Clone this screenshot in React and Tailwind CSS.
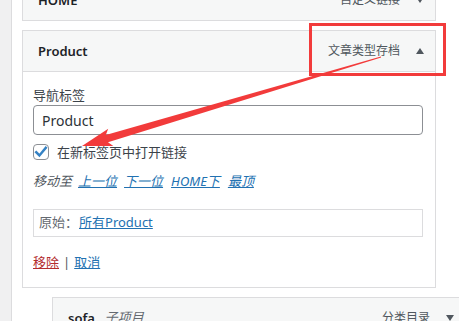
import React from "react";

function TriDown({ className = "" }) {
  return (
    <span
      className={
        "inline-block w-0 h-0 border-l-[4px] border-r-[4px] border-t-[6px] border-l-transparent border-r-transparent border-t-[#50575e] " +
        className
      }
    />
  );
}
function TriUp({ className = "" }) {
  return (
    <span
      className={
        "inline-block w-0 h-0 border-l-[4px] border-r-[4px] border-b-[6px] border-l-transparent border-r-transparent border-b-[#50575e] " +
        className
      }
    />
  );
}

export default function App() {
  // arrow geometry
  const T = [381, 57];
  const P = [82, 146];
  const dx = P[0] - T[0];
  const dy = P[1] - T[1];
  const len = Math.hypot(dx, dy);
  const u = [dx / len, dy / len];
  const n = [-u[1], u[0]];
  const pt = (base, back, off) => [
    base[0] - u[0] * back + n[0] * off,
    base[1] - u[1] * back + n[1] * off,
  ];
  const pts = [
    pt(T, 0, 0.5),
    pt(P, 26, 3.8),
    pt(P, 30, 9),
    P,
    pt(P, 30, -9),
    pt(P, 26, -3.8),
    pt(T, 0, -0.5),
  ]
    .map((p) => p[0].toFixed(1) + "," + p[1].toFixed(1))
    .join(" ");

  return (
    <div className="relative w-[459px] h-[321px] overflow-hidden bg-white flex font-['Noto_Sans','Noto_Sans_CJK_SC',sans-serif] text-[13px] text-[#3c434a]">
      <div className="w-[12px] shrink-0 bg-[#f0f0f1] border-r border-[#dcdcde]" />
      <div className="flex-1 pl-[10px]">
        {/* HOME item */}
        <div className="mt-[-21px] w-[414px] h-[42px] border border-[#dcdcde] bg-[#f6f7f7] flex items-center pl-[15px] pr-[11px]">
          <span className="font-semibold text-[#1d2327] leading-[20px]">HOME</span>
          <span className="ml-auto text-[12px] text-[#50575e]">自定义链接</span>
          <TriDown className="ml-[16px]" />
        </div>

        {/* Product item */}
        <div className="mt-[9px] w-[414px]">
          <div className="h-[42px] border border-[#dcdcde] bg-[#f6f7f7] flex items-center pl-[15px] pr-[11px]">
            <span className="font-semibold text-[#1d2327] leading-[20px]">Product</span>
            <span className="ml-auto text-[12px] text-[#50575e]">文章类型存档</span>
            <TriUp className="ml-[16px]" />
          </div>
          <div className="border-l border-r border-b border-[#dcdcde] bg-white pl-[10px] pr-[12px] pt-[14px] pb-[15px]">
            <div className="leading-[19px] text-[#3c434a]">导航标签</div>
            <div className="h-[30px] border border-[#8c8f94] rounded-[4px] flex items-center pl-[8px] text-[14px] text-[#2c3338]">
              Product
            </div>
            <div className="mt-[9px] h-[16px] flex items-center">
              <span className="w-[16px] h-[16px] shrink-0 border border-[#8c8f94] rounded-[4px] bg-white flex items-center justify-center">
                <svg width="14" height="14" viewBox="0 0 14 14">
                  <path
                    d="M2.2 7.2 L5.4 10.4 L11.8 2.8"
                    fill="none"
                    stroke="#3582c4"
                    strokeWidth="2.4"
                    strokeLinecap="square"
                  />
                </svg>
              </span>
              <span className="ml-[8px] leading-[16px]">在新标签页中打开链接</span>
            </div>
            <div className="mt-[11px] leading-[20px] flex italic">
              <span className="text-[#50575e]">移动至</span>
              <span className="ml-[6px] text-[#2271b1] underline">上一位</span>
              <span className="ml-[7px] text-[#2271b1] underline">下一位</span>
              <span className="ml-[8px] text-[#2271b1] underline">HOME下</span>
              <span className="ml-[8px] text-[#2271b1] underline">最顶</span>
            </div>
            <div className="mt-[18px] h-[28px] border border-[#dcdcde] flex items-center pl-[5px]">
              <span className="text-[#646970]">原始：</span>
              <span className="ml-[1px] text-[#2271b1] underline">所有Product</span>
            </div>
            <div className="mt-[15px] leading-[20px] flex">
              <span className="text-[#b32d2e] underline">移除</span>
              <span className="ml-[4px] text-[#50575e]">|</span>
              <span className="ml-[4px] text-[#2271b1] underline">取消</span>
            </div>
          </div>
        </div>

        {/* sofa item */}
        <div className="mt-[9px] ml-[30px] w-[414px] h-[42px] border border-[#dcdcde] bg-[#f6f7f7] flex items-center pl-[15px] pr-[11px]">
          <span className="font-semibold text-[#1d2327] leading-[20px]">sofa</span>
          <span className="ml-[10px] italic text-[#646970]">子项目</span>
          <span className="ml-auto text-[12px] text-[#50575e]">分类目录</span>
          <TriDown className="ml-[16px]" />
        </div>
      </div>

      {/* annotation overlay */}
      <div className="absolute left-[309px] top-[23px] w-[137px] h-[53px] border-[3px] border-[#f23b3b] pointer-events-none" />
      <svg
        className="absolute left-0 top-0 pointer-events-none"
        width="459"
        height="321"
        viewBox="0 0 459 321"
      >
        <polygon points={pts} fill="#f23b3b" />
      </svg>
    </div>
  );
}
